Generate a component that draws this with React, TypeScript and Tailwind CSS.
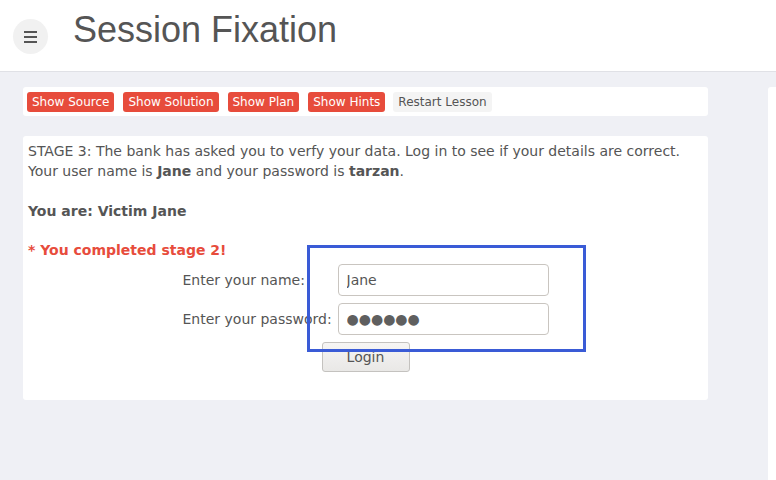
import { useState } from "react";

const lessonButtons = ["Show Source", "Show Solution", "Show Plan", "Show Hints"];

export default function App() {
  const [name, setName] = useState("Jane");
  const password = "tarzan";

  return (
    <div className="min-h-[480px] w-[776px] overflow-hidden bg-[#eff0f5] font-['DejaVu_Sans',sans-serif] text-[#555]">
      <header className="flex h-[72px] items-start border-b border-[#e0e1e6] bg-white">
        <button
          type="button"
          className="ml-[13px] mt-[19px] flex h-[35px] w-[35px] flex-col items-center justify-center gap-[3px] rounded-full bg-[#f1f1f1]"
        >
          <span className="h-[2px] w-[13px] bg-[#555]" />
          <span className="h-[2px] w-[13px] bg-[#555]" />
          <span className="h-[2px] w-[13px] bg-[#555]" />
        </button>
        <h1 className="ml-[25px] mt-[8px] font-['Liberation_Sans',Arial,sans-serif] text-[36px] leading-[44px] text-[#555]">
          Session Fixation
        </h1>
      </header>

      <div className="flex">
        <main className="ml-[23px] w-[685px]">
          <div className="mt-[15px] flex h-[29px] items-center gap-[9px] rounded-[3px] bg-white px-[4px]">
            {lessonButtons.map(label => (
              <button
                key={label}
                type="button"
                className="h-[20px] rounded-[3px] bg-[#e74c3c] px-[5px] text-[12px] leading-[20px] text-white"
              >
                {label}
              </button>
            ))}
            <button
              type="button"
              className="-ml-[1px] h-[20px] rounded-[3px] bg-[#f4f4f4] px-[5px] text-[12px] leading-[20px] text-[#555]"
            >
              Restart Lesson
            </button>
          </div>

          <div className="mt-[20px] h-[264px] rounded-[3px] bg-white px-[5px] pt-[5px] text-[14px] leading-[20px]">
            <p>
              STAGE 3: The bank has asked you to verfy your data. Log in to see if your details are correct.
              <br />
              Your user name is <b>Jane</b> and your password is <b>tarzan</b>.
            </p>
            <p className="mt-[20px] font-bold">You are: Victim Jane</p>
            <p className="mt-[19px] font-bold text-[#e74c3c]">* You completed stage 2!</p>

            <form className="relative mt-[4px] flex flex-col items-center" onSubmit={e => e.preventDefault()}>
              <div className="flex w-[370px] flex-col gap-[7px]">
                <label className="flex items-center">
                  <span className="w-[157px] pl-[2px]">Enter your name:</span>
                  <input
                    value={name}
                    onChange={e => setName(e.target.value)}
                    className="h-[32px] w-[211px] rounded-[4px] border border-[#c9c5c0] px-[8px] text-[14px] text-[#555] outline-none"
                  />
                </label>
                <label className="flex items-center">
                  <span className="w-[157px] pl-[2px]">Enter your password:</span>
                  <input
                    readOnly
                    value={"\u25CF".repeat(password.length)}
                    className="h-[32px] w-[211px] rounded-[4px] border border-[#c9c5c0] px-[8px] text-[14px] text-[#5f5f5f] outline-none"
                  />
                </label>
              </div>
              <button
                type="submit"
                className="mt-[7px] h-[30px] w-[88px] rounded-[3px] border border-[#c4c2bf] bg-gradient-to-b from-[#f6f5f4] to-[#e9e8e6] text-[14px] text-[#555]"
              >
                Login
              </button>
              <div className="pointer-events-none absolute left-[279px] top-[-19px] h-[107px] w-[279px] border-[3px] border-[#3a5bd6]" />
            </form>
          </div>
        </main>
        <aside className="ml-[60px] mt-[15px] h-[393px] w-[8px] rounded-tl-[3px] bg-white" />
      </div>
    </div>
  );
}
